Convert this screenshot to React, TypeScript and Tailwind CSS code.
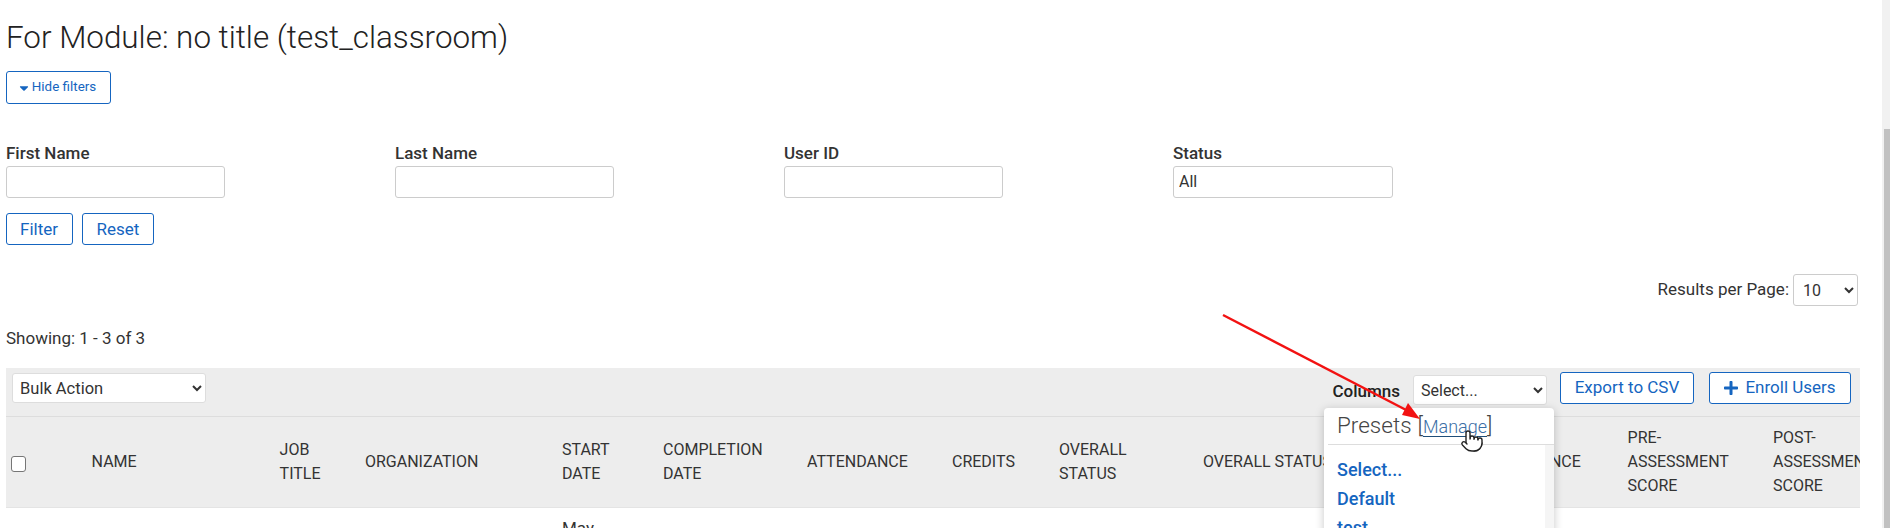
import React from "react";
import { FaCaretDown, FaPlus } from "react-icons/fa";
import { Pointer } from "lucide-react";

const columns: { w: number; lines: string[] }[] = [
  { w: 188, lines: ["NAME"] },
  { w: 85.4, lines: ["JOB", "TITLE"] },
  { w: 197, lines: ["ORGANIZATION"] },
  { w: 101, lines: ["START", "DATE"] },
  { w: 144, lines: ["COMPLETION", "DATE"] },
  { w: 145, lines: ["ATTENDANCE"] },
  { w: 107, lines: ["CREDITS"] },
  { w: 144, lines: ["OVERALL", "STATUS"] },
  { w: 277, lines: ["OVERALL STATUS"] },
  { w: 147.6, lines: ["ATTENDANCE"] },
  { w: 145.4, lines: ["PRE-", "ASSESSMENT", "SCORE"] },
  { w: 145.4, lines: ["POST-", "ASSESSMENT", "SCORE"] },
];

function Field({ label, children }: { label: string; children?: React.ReactNode }) {
  return (
    <div>
      <label className="block h-[26px] text-[17px] leading-[24px] font-medium text-[#333] pt-[1px]">{label}</label>
      {children ?? <input className="block w-[219px] h-[32px] bg-white border border-[#ccc] rounded-[3px]" />}
    </div>
  );
}

function OutlineButton({ children, className }: { children: React.ReactNode; className: string }) {
  return (
    <button className={`flex items-center justify-center bg-white border border-[#1565c0] rounded-[3px] text-[#1565c0] ${className}`}>
      {children}
    </button>
  );
}

export default function App() {
  return (
    <div className="relative flex h-[528px] overflow-hidden bg-white font-['Roboto',sans-serif] text-[17px] text-[#333]">
      <main className="min-w-0 flex-1 pl-[6px] pr-[22px]">
        <h1 className="h-[71px] pt-[18px] text-[31.4px] leading-[40px] font-light text-[#222]">
          For Module: no title (test_classroom)
        </h1>
        <OutlineButton className="w-[105px] h-[33px] gap-[1px] pr-[4px] text-[13.4px]">
          <FaCaretDown className="text-[14px]" />
          Hide filters
        </OutlineButton>

        <div className="mt-[36px] grid grid-cols-[389px_389px_389px_389px]">
          <Field label="First Name" />
          <Field label="Last Name" />
          <Field label="User ID" />
          <Field label="Status">
            <select className="block w-[220px] h-[32px] appearance-none bg-white border border-[#ccc] rounded-[3px] pl-[5px] text-[16px] text-[#333]">
              <option>All</option>
            </select>
          </Field>
        </div>

        <div className="mt-[15px] flex gap-[9px]">
          <OutlineButton className="w-[67px] h-[32px] pt-[1px] pr-[1px]">Filter</OutlineButton>
          <OutlineButton className="w-[72px] h-[32px] pt-[1px]">Reset</OutlineButton>
        </div>

        <div className="mt-[29px] flex h-[32px] items-center justify-end gap-[4px] pr-[2px]">
          <span>Results per Page:</span>
          <select className="w-[65px] h-[32px] bg-white border border-[#ccc] rounded-[3px] pl-[5px] text-[16px] text-[#333]">
            <option>10</option>
          </select>
        </div>

        <div className="mt-[20px] h-[24px] leading-[24px]">Showing: 1 - 3 of 3</div>

        <div className="mt-[18px] flex h-[49px] items-start border-b border-[#ddd] bg-[#ededed] pl-[6px] pr-[9px]">
          <select className="mt-[5px] w-[194px] h-[30px] bg-white border border-[#ddd] rounded-[3px] pl-[3px] text-[16.5px] text-[#333]">
            <option>Bulk Action</option>
          </select>
          <div className="ml-auto flex items-start">
            <span className="mt-[11px] font-medium text-[#222]">Columns</span>
            <select className="mt-[7px] ml-[13px] w-[134px] h-[30px] bg-white border border-[#ddd] rounded-[3px] pl-[3px] text-[16px] text-[#333]">
              <option>Select...</option>
            </select>
            <OutlineButton className="mt-[4px] ml-[13px] w-[134px] h-[32px]">Export to CSV</OutlineButton>
            <OutlineButton className="mt-[4px] ml-[15px] w-[142px] h-[32px] gap-[6px] pr-[1px]">
              <FaPlus className="text-[16px]" />
              Enroll Users
            </OutlineButton>
          </div>
        </div>

        <div className="overflow-hidden">
          <table className="table-fixed border-collapse w-[1902.4px]">
            <colgroup>
              <col className="w-[85.6px]" />
              {columns.map((c, i) => (
                <col key={i} style={{ width: c.w }} />
              ))}
            </colgroup>
            <thead>
              <tr className="h-[90px] bg-[#ededed] border-b border-[#e4e4e4]">
                <th className="pl-[5px] text-left align-middle">
                  <input type="checkbox" className="block w-[15px] h-[16px] mt-[4px] appearance-none bg-white border border-[#767676] rounded-[3px]" />
                </th>
                {columns.map((c, i) => (
                  <th key={i} className="text-left align-middle font-normal text-[16px] leading-[24px] text-[#333] whitespace-nowrap">
                    {c.lines.map((l) => (
                      <div key={l}>{l}</div>
                    ))}
                  </th>
                ))}
              </tr>
            </thead>
            <tbody>
              <tr>
                <td />
                <td />
                <td />
                <td />
                <td className="pt-[8px] leading-[24px] align-top">May</td>
              </tr>
            </tbody>
          </table>
        </div>
      </main>

      <div className="w-[8px] shrink-0 bg-[#f1f1f1] pl-[2px] pt-[129px]">
        <div className="h-full bg-[#c1c1c1]" />
      </div>

      {/* presets menu */}
      <div className="absolute left-[1324px] top-[408px] w-[230px] h-[140px] overflow-hidden rounded-[4px] bg-white shadow-[0_2px_10px_rgba(0,0,0,0.22)]">
        <div className="ml-[4px] flex h-[37px] items-center border-b border-[#ddd] pl-[9px] text-[22.5px] font-light text-[#444]">
          Presets<span className="ml-[6px]">[</span>
          <a className="text-[18px] text-[#3a6ea5] underline underline-offset-[3px] decoration-[#1f4e79]">Manage</a>
          <span>]</span>
        </div>
        <div className="flex">
          <div className="flex-1 pl-[13px] pt-[10px] text-[18px] leading-[29px] font-medium text-[#1565c0]">
            <div>Select...</div>
            <div>Default</div>
            <div>test</div>
          </div>
          <div className="w-[9px] h-[110px] bg-[#f5f5f5]" />
        </div>
      </div>

      {/* annotation arrow */}
      <svg className="absolute left-[1215px] top-[310px] pointer-events-none" width="215" height="115" viewBox="0 0 215 115">
        <line x1="8" y1="5" x2="195" y2="102" stroke="#f21212" strokeWidth="2.4" />
        <polygon points="205,109 187,105 193,93" fill="#f21212" />
      </svg>

      {/* mouse cursor */}
      <Pointer className="absolute left-[1460px] top-[429px]" size={24} fill="#fff" color="#222" strokeWidth={1.4} />
    </div>
  );
}
